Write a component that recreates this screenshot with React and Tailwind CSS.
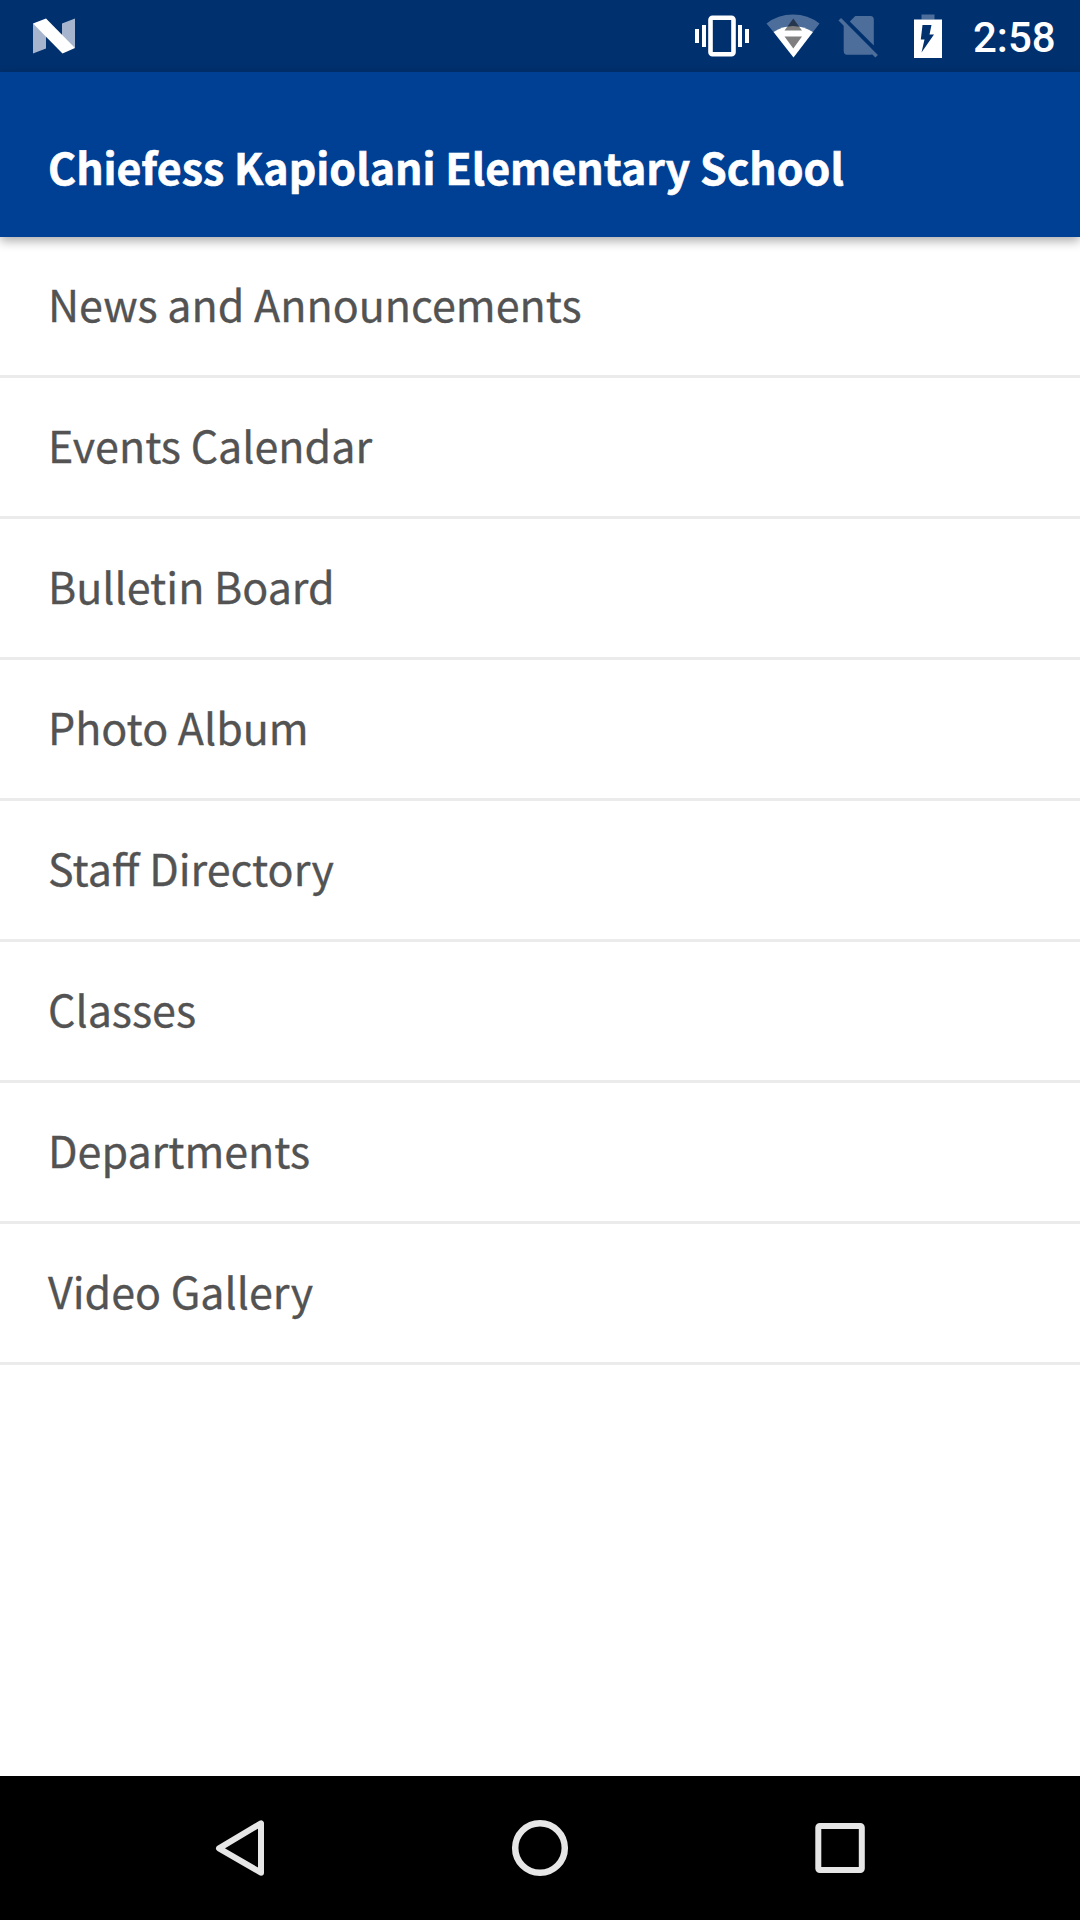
const items = [
  'News and Announcements',
  'Events Calendar',
  'Bulletin Board',
  'Photo Album',
  'Staff Directory',
  'Classes',
  'Departments',
  'Video Gallery',
];

function StatusBar() {
  return (
    <div className="flex h-[72px] shrink-0 items-center bg-[#00306e] pl-[33px]">
      <svg className="h-[72px] w-[42px]" viewBox="33 0 42 72">
        <path d="M33 23.5L46 30V48.5L33 53.5ZM75 18.5V48L62 42V23.5Z" fill="#a6b5cd" />
        <path d="M33 23.5L46 18.5L75 48L62.5 53.5Z" fill="#fff" />
      </svg>
      <div className="ml-auto flex items-center">
        <svg className="h-[72px] w-[54px]" viewBox="695 0 54 72" fill="#fff">
          <path d="M695 29h4v14h-4zM702 25h4v22h-4zM738 25h4v22h-4zM745 29h4v14h-4z" />
          <rect x="710.5" y="17.8" width="23" height="36.4" rx="2" fill="none" stroke="#fff" strokeWidth="4.6" />
        </svg>
        <svg className="ml-[17px] h-[72px] w-[54px]" viewBox="766 0 54 72">
          <path d="M766.5 23.5Q778 14.5 793 14.5T819.5 23.5L813 32Q804 26 793 26T773.5 32Z" fill="#4d6e9a" />
          <path d="M773.5 32Q782 26 793 26T813 32L793.5 57.5Z" fill="#fff" />
          <path d="M793.3 18.5L802 30.5H784.5ZM784.5 36.5H802L793.3 48.5Z" fill="#000" opacity="0.5" />
        </svg>
        <svg className="ml-[18px] h-[72px] w-[41px]" viewBox="838 0 41 72">
          <path d="M849.8 21.5L855.3 16H870.5Q873.8 16 873.8 19.5V45.5ZM843.7 24V51Q843.7 54.7 847 54.7H870.5Q872 54.7 872.8 54Z" fill="#4d6e9a" />
          <path d="M839.8 19.3L876.6 56.3" stroke="#4d6e9a" strokeWidth="3.6" fill="none" />
        </svg>
        <svg className="ml-[35px] h-[72px] w-[28px]" viewBox="914 0 28 72">
          <path d="M921.5 14.5h13v5h-13z" fill="#4d6e9a" />
          <path d="M914 19.5h28v38.5h-28z" fill="#fff" />
          <path d="M922.5 25H931.5L929.5 34.5H934L921.5 52.5L924.5 39.5H920.8Z" fill="#00306e" />
        </svg>
        <span className="ml-[31px] w-[107px] pt-[3px] text-[42px] leading-[69px] font-medium text-white [font-family:Roboto,sans-serif]">
          2:58
        </span>
      </div>
    </div>
  );
}

function NavBar() {
  return (
    <div className="flex h-36 shrink-0 items-center justify-center gap-[156px] bg-black">
      <svg className="h-36 w-36" viewBox="168 1776 144 144" fill="none" stroke="#e6e6e6" strokeWidth="6" strokeLinejoin="round">
        <path d="M219 1848.3L261 1823.3V1872.7Z" />
      </svg>
      <svg className="h-36 w-36" viewBox="468 1776 144 144" fill="none" stroke="#e6e6e6" strokeWidth="6.5">
        <circle cx="540" cy="1848" r="24.8" />
      </svg>
      <svg className="h-36 w-36" viewBox="768 1776 144 144" fill="none" stroke="#e6e6e6" strokeWidth="6">
        <rect x="818.3" y="1826" width="43.5" height="44" rx="1.5" />
      </svg>
    </div>
  );
}

export default function App() {
  return (
    <div className="flex h-[1920px] w-[1080px] flex-col overflow-hidden bg-white [font-family:'Noto_Sans_CJK_SC',sans-serif]">
      <StatusBar />
      <header className="relative flex h-[165px] shrink-0 items-center bg-[#004094] px-12 pt-[23px] shadow-[0_4px_10px_rgba(0,0,0,0.33)]">
        <h1 className="text-[42.9px] leading-[60px] font-bold text-white [-webkit-text-stroke:0.6px_white]">
          Chiefess Kapiolani Elementary School
        </h1>
      </header>
      <ul className="flex-1">
        {items.map((item) => (
          <li
            key={item}
            className="flex h-[141px] items-center border-b-3 border-[#ebebeb] px-12 pb-[6px] text-[43px] leading-[60px] text-[#535353] [-webkit-text-stroke:0.3px_#535353]"
          >
            {item}
          </li>
        ))}
      </ul>
      <NavBar />
    </div>
  );
}
